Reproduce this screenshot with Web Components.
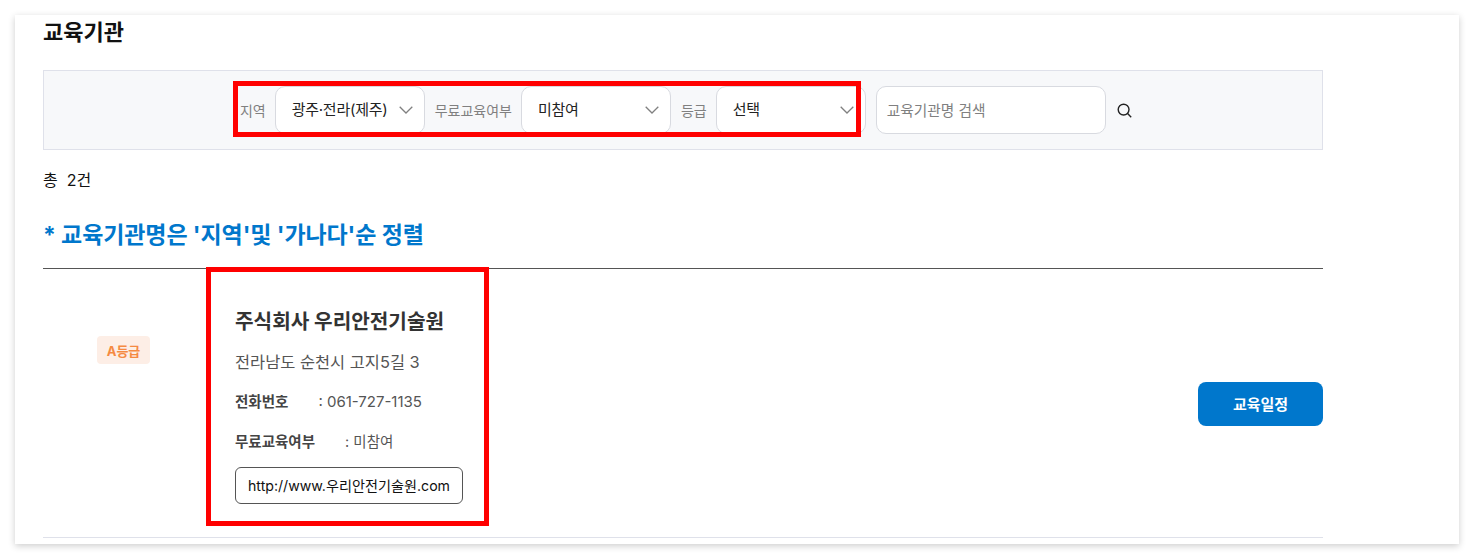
<!DOCTYPE html>
<html lang="ko">
<head>
<meta charset="utf-8">
<title>교육기관</title>
<style>
    html, body{
        margin: 0;
        height: 559px;
        overflow: hidden;
        background: #fff;
        font-family: Inter, "Noto Sans CJK KR", sans-serif;
    }
</style>
</head>
<body>
<edu-card>
    <h-title>교육기관</h-title>
    <filter-bar>
        <select-box label="지역" value="광주·전라(제주)"></select-box>
        <select-box label="무료교육여부" value="미참여"></select-box>
        <select-box label="등급" value="선택"></select-box>
        <search-box placeholder="교육기관명 검색"></search-box>
    </filter-bar>
    <total-count>총&nbsp; 2건</total-count>
    <sort-note>* 교육기관명은 '지역'및 '가나다'순 정렬</sort-note>
    <org-row
        grade="A등급"
        name="주식회사 우리안전기술원"
        address="전라남도 순천시 고지5길 3"
        phone="061-727-1135"
        free="미참여"
        url="http://www.우리안전기술원.com"></org-row>
    <red-mark style="left:218px;top:66px;width:628px;height:56px"></red-mark>
    <red-mark style="left:191px;top:252px;width:283px;height:259px"></red-mark>
</edu-card>

<script>
class EduCard extends HTMLElement{
    constructor(){
        super();
        this.attachShadow({mode:"open"});
        this.shadowRoot.innerHTML = `
        <style>
            :host{
                display: block;
                position: relative;
                box-sizing: border-box;
                width: 1444px;
                height: 529px;
                margin: 15px 0 0 15px;
                padding: 0 136px 0 28px;
                background: #fff;
                overflow: visible;
                box-shadow: 0 2px 7px rgba(0,0,0,.2);
            }
        </style>
        <slot></slot>`
    }
}

class HTitle extends HTMLElement{
    constructor(){
        super();
        this.attachShadow({mode:"open"});
        this.shadowRoot.innerHTML = `
        <style>
            :host{
                display: block;
                height: 55px;
                padding-top: 1px;
                box-sizing: border-box;
                font-size: 22px;
                line-height: 32px;
                font-weight: 700;
                color: #111;
            }
        </style>
        <slot></slot>`
    }
}

class FilterBar extends HTMLElement{
    constructor(){
        super();
        this.attachShadow({mode:"open"});
        this.shadowRoot.innerHTML = `
        <style>
            :host{
                display: flex;
                justify-content: center;
                align-items: center;
                box-sizing: border-box;
                height: 80px;
                padding-left: 5.6px;
                background: #f7f8fa;
                border: 1px solid #dfe1ea;
            }
        </style>
        <slot></slot>`
    }
}

class SelectBox extends HTMLElement{
    constructor(){
        super();
        this.attachShadow({mode:"open"});
        this.shadowRoot.innerHTML = `
        <style>
            :host{
                display: flex;
                align-items: center;
                margin-right: 10px;
            }
            .label{
                font-size: 14px;
                color: #808080;
                margin-right: 9px;
                white-space: nowrap;
            }
            .box{
                display: flex;
                align-items: center;
                justify-content: space-between;
                box-sizing: border-box;
                width: 150px;
                height: 48px;
                padding: 0 11px 0 16px;
                background: #fff;
                border: 1px solid #d8dae0;
                border-radius: 10px;
                font-size: 15px;
                letter-spacing: -0.25px;
                color: #222;
                white-space: nowrap;
            }
            .value{ padding-bottom: 3px; }
            svg{ flex: none; }
        </style>
        <span class="label"></span>
        <div class="box">
            <span class="value"></span>
            <svg width="14" height="8" viewBox="0 0 14 8" fill="none" stroke="#808080" stroke-width="1.3"><path d="M.7.8 7 7 13.3.8"/></svg>
        </div>`
    }
    connectedCallback(){
        this.shadowRoot.querySelector(".label").textContent = this.getAttribute("label");
        this.shadowRoot.querySelector(".value").textContent = this.getAttribute("value");
    }
}

class SearchBox extends HTMLElement{
    constructor(){
        super();
        this.attachShadow({mode:"open"});
        this.shadowRoot.innerHTML = `
        <style>
            :host{
                display: flex;
                align-items: center;
            }
            .input{
                display: flex;
                align-items: center;
                box-sizing: border-box;
                width: 230px;
                height: 48px;
                padding: 0 0 1px 10px;
                background: #fff;
                border: 1px solid #d8dae0;
                border-radius: 10px;
                font-size: 14.7px;
                color: #808080;
            }
            svg{ margin-left: 11px; }
        </style>
        <div class="input"></div>
        <svg width="15" height="15" viewBox="0 0 15 15" fill="none" stroke="#222" stroke-width="1.4"><circle cx="6.6" cy="6.6" r="5.4"/><path d="m10.6 10.6 3.6 3.6"/></svg>`
    }
    connectedCallback(){
        this.shadowRoot.querySelector(".input").textContent = this.getAttribute("placeholder");
    }
}

class TotalCount extends HTMLElement{
    constructor(){
        super();
        this.attachShadow({mode:"open"});
        this.shadowRoot.innerHTML = `
        <style>
            :host{
                display: block;
                margin-top: 19px;
                font-size: 16px;
                line-height: 22px;
                color: #111;
            }
        </style>
        <slot></slot>`
    }
}

class SortNote extends HTMLElement{
    constructor(){
        super();
        this.attachShadow({mode:"open"});
        this.shadowRoot.innerHTML = `
        <style>
            :host{
                display: block;
                box-sizing: border-box;
                height: 78px;
                padding-top: 27px;
                font-size: 23px;
                letter-spacing: -0.1px;
                line-height: 34px;
                font-weight: 700;
                color: #0077cc;
                border-bottom: 1px solid #555;
            }
        </style>
        <slot></slot>`
    }
}

class OrgRow extends HTMLElement{
    constructor(){
        super();
        this.attachShadow({mode:"open"});
        this.shadowRoot.innerHTML = `
        <style>
            :host{
                display: flex;
                box-sizing: border-box;
                height: 269px;
                border-bottom: 1px solid #dfe1ea;
                color: #555;
            }
            .grade{
                flex: none;
                width: 192px;
                padding: 67px 0 0 54px;
                box-sizing: border-box;
            }
            .badge{
                display: flex;
                align-items: center;
                justify-content: center;
                width: 53px;
                height: 28px;
                border-radius: 4px;
                background: #fdeee6;
                color: #f58a42;
                font-size: 13px;
                font-weight: 700;
            }
            .info{
                flex: 1;
                padding-top: 38px;
            }
            .name{
                font-size: 20.2px;
                line-height: 30px;
                font-weight: 700;
                color: #333;
            }
            .address{
                margin-top: 13px;
                font-size: 16.4px;
                line-height: 24px;
            }
            .line{
                display: flex;
                margin-top: 16px;
                font-size: 15px;
                line-height: 24px;
            }
            .line b{
                font-size: 14.5px;
                font-weight: 700;
                color: #444;
                margin-right: 30px;
            }
            .free{ font-size: 14.5px; }
            .url{
                box-sizing: border-box;
                width: 228px;
                height: 37px;
                margin-top: 13px;
                border: 1px solid #555;
                border-radius: 6px;
                background: #fff;
                font-size: 14.15px;
                line-height: 35px;
                text-align: center;
                color: #111;
                white-space: nowrap;
            }
            .action{
                flex: none;
                padding-top: 113px;
            }
            .btn{
                display: flex;
                align-items: center;
                justify-content: center;
                width: 125px;
                height: 44px;
                border-radius: 8px;
                background: #0077cc;
                color: #fff;
                font-size: 15px;
                font-weight: 700;
                padding-bottom: 1px;
                box-sizing: border-box;
            }
        </style>
        <div class="grade"><div class="badge"></div></div>
        <div class="info">
            <div class="name"></div>
            <div class="address"></div>
            <div class="line"><b>전화번호</b><span class="phone"></span></div>
            <div class="line free"><b>무료교육여부</b><span class="freeval"></span></div>
            <div class="url"></div>
        </div>
        <div class="action"><div class="btn">교육일정</div></div>`
    }
    connectedCallback(){
        const root = this.shadowRoot;
        root.querySelector(".badge").textContent = this.getAttribute("grade");
        root.querySelector(".name").textContent = this.getAttribute("name");
        root.querySelector(".address").textContent = this.getAttribute("address");
        root.querySelector(".phone").textContent = ": " + this.getAttribute("phone");
        root.querySelector(".freeval").textContent = ": " + this.getAttribute("free");
        root.querySelector(".url").textContent = this.getAttribute("url");
    }
}

// annotation boxes, these lie over the page
class RedMark extends HTMLElement{
    constructor(){
        super();
        this.attachShadow({mode:"open"});
        this.shadowRoot.innerHTML = `
        <style>
            :host{
                display: block;
                position: absolute;
                box-sizing: border-box;
                border: 5px solid #ff0000;
                pointer-events: none;
            }
        </style>`
    }
}

customElements.define("edu-card", EduCard)
customElements.define("h-title", HTitle)
customElements.define("filter-bar", FilterBar)
customElements.define("select-box", SelectBox)
customElements.define("search-box", SearchBox)
customElements.define("total-count", TotalCount)
customElements.define("sort-note", SortNote)
customElements.define("org-row", OrgRow)
customElements.define("red-mark", RedMark)
</script>
</body>
</html>
